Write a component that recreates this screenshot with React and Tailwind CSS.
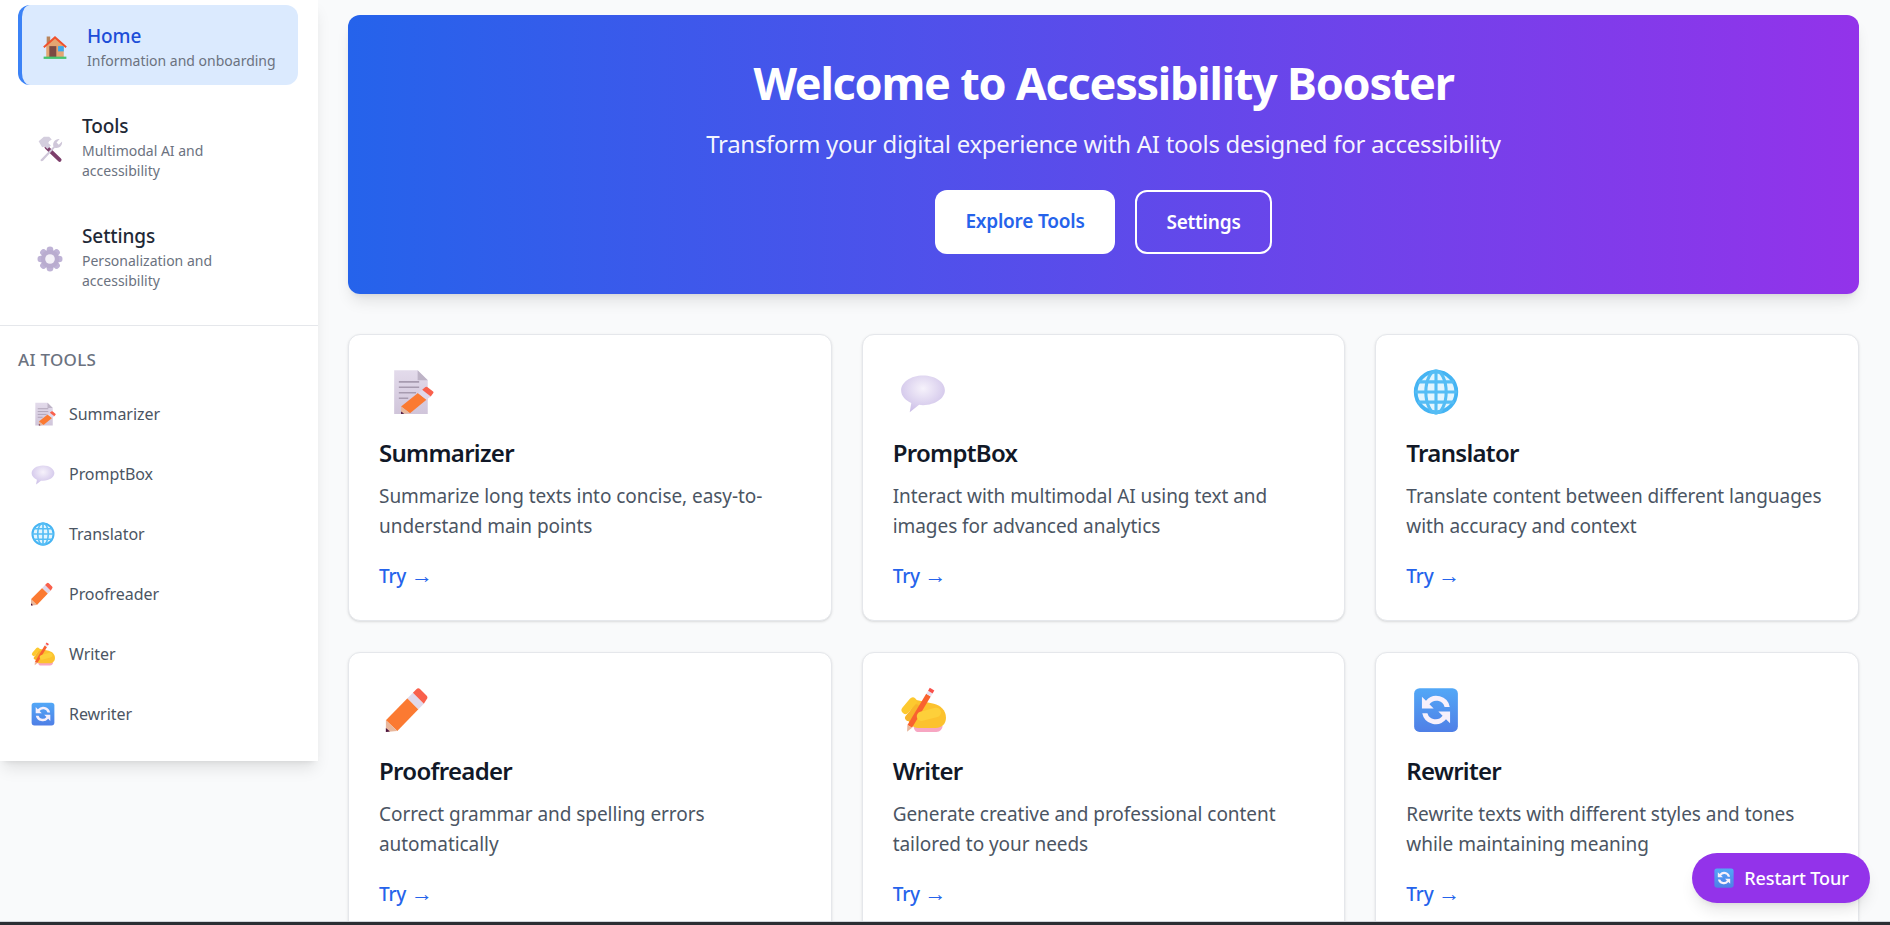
import React from "react";

const font = { fontFamily: '"Noto Sans", "Open Sans", sans-serif' };

function HouseIcon({ size = 28 }) {
  return (
    <svg width={size} height={size} viewBox="0 0 32 32" className="mt-[4px] shrink-0">
      <rect x="6.500" y="4" width="4" height="11" fill="#b9855c" />
      <path d="M6 13 16 4.500 26 13v15H6z" fill="#e3a572" />
      <path d="M2.500 15.500 16 3.500l13.500 12-1.400 1.600L16 6.600 3.900 17.100z" fill="#f0512d" />
      <rect x="9.500" y="15" width="8" height="13" fill="#7b4a43" />
      <rect x="19.500" y="15" width="6.500" height="6" fill="#3ba9ee" />
      <rect x="3" y="27" width="26" height="2.600" fill="#45c46e" />
    </svg>
  );
}

function ToolsIcon({ size = 28 }) {
  return (
    <svg width={size} height={size} viewBox="0 0 32 32" className="mt-[4px] shrink-0">
      <path d="M12 14 27 28.500" stroke="#7d3f6b" strokeWidth="4.400" strokeLinecap="round" />
      <path d="M3 7 9 2h6l3 3-3 2-1 2 3 3-4 4-3-3-3 1z" fill="#d4cede" />
      <path d="M5 28.500 20 13c-1.500-4 1.500-9 7-8.500l-3.500 4 2.500 2.500 3.800-3.500c.5 5.500-4.300 8.500-8.300 7L8 29.500a2 2 0 0 1-3-1z" fill="#cfc7d9" />
    </svg>
  );
}

function GearIcon({ size = 28 }) {
  const teeth = [0, 45, 90, 135, 180, 225, 270, 315];
  return (
    <svg width={size} height={size} viewBox="0 0 32 32" className="mt-[4px] shrink-0">
      {teeth.map((a) => (
        <circle key={a} cx="16" cy="5.500" r="3.800" fill="#bfb3d6" transform={`rotate(${a} 16 16)`} />
      ))}
      <circle cx="16" cy="16" r="10.500" fill="#b9accf" />
      <circle cx="16" cy="16" r="5.500" fill="#f4f1f8" />
    </svg>
  );
}

function PencilShape() {
  return (
    <>
      <path d="M1.200 22.500 15 8.500 22 15.500 8.500 29.400z" fill="#fb7a32" />
      <path d="M15 8.500 18.500 5 25.500 12 22 15.500z" fill="#e0d8ea" />
      <path d="M18.500 5 20.700 2.700a1.800 1.800 0 0 1 2.500 0l4 4a1.800 1.800 0 0 1 0 2.500L25.500 12z" fill="#f9604c" />
      <path d="M1.200 22.500 8.500 29.400 1.200 30z" fill="#e8b79c" />
      <path d="M1.200 27.500 3.800 29.800 1.200 30z" fill="#4a1440" />
    </>
  );
}

function DocIcon({ size = 50 }) {
  return (
    <svg width={size} height={size} viewBox="0 0 32 32" className="shrink-0">
      <defs>
        <linearGradient id="doc-fill" x1="0" y1="0" x2="0" y2="1">
          <stop offset="0" stopColor="#e3dbeb" />
          <stop offset="1" stopColor="#d0c5da" />
        </linearGradient>
      </defs>
      <path d="M6.500 2h15L28 8.500V30H6.500z" fill="url(#doc-fill)" />
      <path d="M21.500 2 28 8.500h-6.500z" fill="#bdb3c6" />
      <path d="M9.500 9.500h13M9.500 13h13M9.500 16.500h11M9.500 20h6" stroke="#a79bb0" strokeWidth="1" />
      <g transform="translate(10 11.400) scale(.78 .62)">
        <PencilShape />
      </g>
    </svg>
  );
}

function BalloonIcon({ size = 50 }) {
  return (
    <svg width={size} height={size} viewBox="0 0 32 32" className="shrink-0">
      <defs>
        <radialGradient id="balloon-fill" cx="50%" cy="35%" r="65%">
          <stop offset="0" stopColor="#f6f2fb" />
          <stop offset="1" stopColor="#cdc0e8" />
        </radialGradient>
      </defs>
      <path d="M16 5.500C8 5.500 2 10 2 15c0 3.500 3 6.500 6.500 8l-1 6 6-4.800c.8.100 1.700.2 2.500.2 8 0 14-4.500 14-9.500S24 5.500 16 5.500z" fill="url(#balloon-fill)" />
    </svg>
  );
}

function GlobeIcon({ size = 50 }) {
  return (
    <svg width={size} height={size} viewBox="0 0 32 32" fill="none" stroke="#55bdf5" strokeWidth="2" className="shrink-0">
      <circle cx="16" cy="16" r="13" fill="#e3f5fe" stroke="#45b4f3" strokeWidth="2.400" />
      <ellipse cx="16" cy="16" rx="6.500" ry="13.500" />
      <path d="M16 2.500v27M2.500 16h27M4.500 9.500h23M4.500 22.500h23" />
    </svg>
  );
}

function PencilIcon({ size = 50 }) {
  return (
    <svg width={size} height={size} viewBox="0 0 32 32" className="shrink-0">
      <PencilShape />
    </svg>
  );
}

function WriterIcon({ size = 50 }) {
  return (
    <svg width={size} height={size} viewBox="0 0 32 32" className="shrink-0">
      <path d="M10 26h18.500c0 2-1.500 4-4 4H12.500c-1.500 0-2.500-2-2.500-4z" fill="#f7a6c2" />
      <path d="M11 9.500 23 12C27 13 30.700 16 30.700 21 30.700 25 28 27.500 24 27.500H13C9.500 27.500 7 25 6 21z" fill="#fcc22e" />
      <path d="M4.800 16 9.500 10.500" stroke="#fdc92f" strokeWidth="5" strokeLinecap="round" />
      <path d="M6.500 21 12 14.500" stroke="#f8b42a" strokeWidth="4" strokeLinecap="round" />
      <path d="M7.500 26.500 19.500 6.500" stroke="#f9622f" strokeWidth="3.400" />
      <path d="M19.500 6.500 20.700 4.500" stroke="#e8e0ef" strokeWidth="3.400" />
      <path d="M20.700 4.500 21.800 2.700" stroke="#f9504a" strokeWidth="3.400" />
      <path d="M6 25.600 9 27.400 5.800 29.900z" fill="#e8b79c" />
      <path d="M15 20 24.500 17.500" stroke="#fdd03a" strokeWidth="6" strokeLinecap="round" />
    </svg>
  );
}

function RewriteIcon({ size = 50 }) {
  return (
    <svg width={size} height={size} viewBox="0 0 32 32" className="shrink-0">
      <defs>
        <linearGradient id="rewrite-fill" x1="0" y1="0" x2="0" y2="1">
          <stop offset="0" stopColor="#52a8f7" />
          <stop offset="1" stopColor="#4f7fe6" />
        </linearGradient>
      </defs>
      <rect x="2" y="2" width="28" height="28" rx="3.500" fill="url(#rewrite-fill)" />
      <path d="M7 7.500v7.500h7.500l-2.700-2.700A5.500 5.500 0 0 1 21.500 14h3.300A8.700 8.700 0 0 0 9.600 10.100z" fill="#f7f0fb" />
      <path d="M25 24.500V17h-7.500l2.700 2.700A5.500 5.500 0 0 1 10.500 18H7.200a8.700 8.700 0 0 0 15.200 3.900z" fill="#f7f0fb" />
    </svg>
  );
}

const tools = [
  { name: "Summarizer", Icon: DocIcon, desc: "Summarize long texts into concise, easy-to-understand main points" },
  { name: "PromptBox", Icon: BalloonIcon, desc: "Interact with multimodal AI using text and images for advanced analytics" },
  { name: "Translator", Icon: GlobeIcon, desc: "Translate content between different languages with accuracy and context" },
  { name: "Proofreader", Icon: PencilIcon, desc: "Correct grammar and spelling errors automatically" },
  { name: "Writer", Icon: WriterIcon, desc: "Generate creative and professional content tailored to your needs" },
  { name: "Rewriter", Icon: RewriteIcon, desc: "Rewrite texts with different styles and tones while maintaining meaning" },
];

function NavItem({ Icon, title, sub }) {
  return (
    <div className="flex items-center gap-[18px] pl-[18px] pr-4 pt-[17px] pb-[14px] rounded-xl">
      <Icon size={28} />
      <div className="flex-1">
        <div className="text-[19px] leading-[28px] font-medium text-[#1f2937] tracking-[-0.1px]">{title}</div>
        <div className="mt-[1px] text-[14px] leading-[20px] text-[#6b7280]">{sub}</div>
      </div>
    </div>
  );
}

function ToolCard({ tool }) {
  const { Icon, name, desc } = tool;
  return (
    <div className="bg-white border border-[#e5e7eb] rounded-xl shadow-sm h-[287px] pl-[30px] pr-[29px] pt-[27px] shrink-0">
      <div className="w-[60px] h-[60px] flex items-center justify-center">
        <Icon size={50} />
      </div>
      <h3 className="mt-[13px] text-[24px] leading-[36px] font-semibold text-[#111827] tracking-[-0.7px]">{name}</h3>
      <p className="mt-[10px] text-[19px] leading-[30px] text-[#4b5563] tracking-[-0.05px]">{desc}</p>
      <div className="mt-[21px] text-[19px] leading-[28px] font-medium text-[#2563eb] tracking-[-0.2px]">
        Try <span className="font-['Liberation_Sans'] font-normal text-[22px] leading-[20px]">→</span>
      </div>
    </div>
  );
}

export default function App() {
  return (
    <div className="h-screen flex flex-col overflow-hidden bg-[#f9fafb] relative" style={font}>
      <div className="flex flex-1 min-h-0">
        <aside className="w-[318px] shrink-0 self-start bg-white shadow-lg">
          <nav className="flex flex-col gap-[10px] pl-[18px] pr-[20px] pt-[5px] pb-[20px] border-b border-[#e5e7eb]">
            <div className="flex items-center gap-[18px] h-[80px] pl-[19px] pr-2 rounded-xl bg-[#dbeafe] border-l-4 border-[#3b82f6]">
              <HouseIcon size={28} />
              <div className="pt-[2px]">
                <div className="text-[19px] leading-[28px] font-medium text-[#1d4ed8] tracking-[-0.1px]">Home</div>
                <div className="mt-[1px] text-[14px] leading-[20px] text-[#6b7280]">Information and onboarding</div>
              </div>
            </div>
            <NavItem Icon={ToolsIcon} title="Tools" sub="Multimodal AI and accessibility" />
            <NavItem Icon={GearIcon} title="Settings" sub="Personalization and accessibility" />
          </nav>
          <div className="pl-[18px] pr-[20px] pt-[22px] pb-[22px]">
            <div className="text-[17px] leading-[24px] font-medium text-[#6b7280] uppercase tracking-[0.3px]">AI Tools</div>
            <div className="flex flex-col gap-[10px] mt-[17px]">
              {tools.map(({ name, Icon }) => (
                <div key={name} className="flex items-center gap-[13px] h-[50px] pl-[12px]">
                  <Icon size={26} />
                  <span className="text-[16px] text-[#4b5563] tracking-[-0.05px]">{name}</span>
                </div>
              ))}
            </div>
          </div>
        </aside>

        <main className="flex-1 min-w-0 pl-[30px] pr-[31px] pt-[15px] overflow-hidden">
          <section className="h-[279px] rounded-xl bg-linear-to-r/srgb from-[#2563eb] to-[#9333ea] shadow-lg flex flex-col items-center pt-[40px] text-white">
            <h1 className="text-[45px] leading-[56px] font-bold tracking-[-1.25px]">Welcome to Accessibility Booster</h1>
            <p className="mt-[17px] text-[24px] leading-[32px] tracking-[-0.28px] text-white/95">Transform your digital experience with AI tools designed for accessibility</p>
            <div className="mt-[30px] flex gap-[20px] items-stretch">
              <button className="w-[180px] h-[64px] pb-[2px] rounded-xl bg-white text-[#2563eb] text-[19px] font-semibold tracking-[-0.2px]">Explore Tools</button>
              <button className="w-[137px] h-[64px] pt-[1px] rounded-xl border-2 border-white text-white text-[19px] font-semibold tracking-[-0.2px]">Settings</button>
            </div>
          </section>
          <div className="grid grid-cols-3 gap-x-[30px] gap-y-[31px] mt-[40px]">
            {tools.map((tool) => (
              <ToolCard key={tool.name} tool={tool} />
            ))}
          </div>
        </main>
      </div>
      <div className="h-[4px] shrink-0 bg-[#2b2e33] border-t border-[#d1d5db]" />

      <button className="absolute right-[20px] bottom-[22px] w-[178px] h-[50px] rounded-full bg-[#9333ea] text-white shadow-lg flex items-center justify-center gap-[9px] text-[18px] font-medium tracking-[-0.1px]">
        <RewriteIcon size={22} />
        Restart Tour
      </button>
    </div>
  );
}
